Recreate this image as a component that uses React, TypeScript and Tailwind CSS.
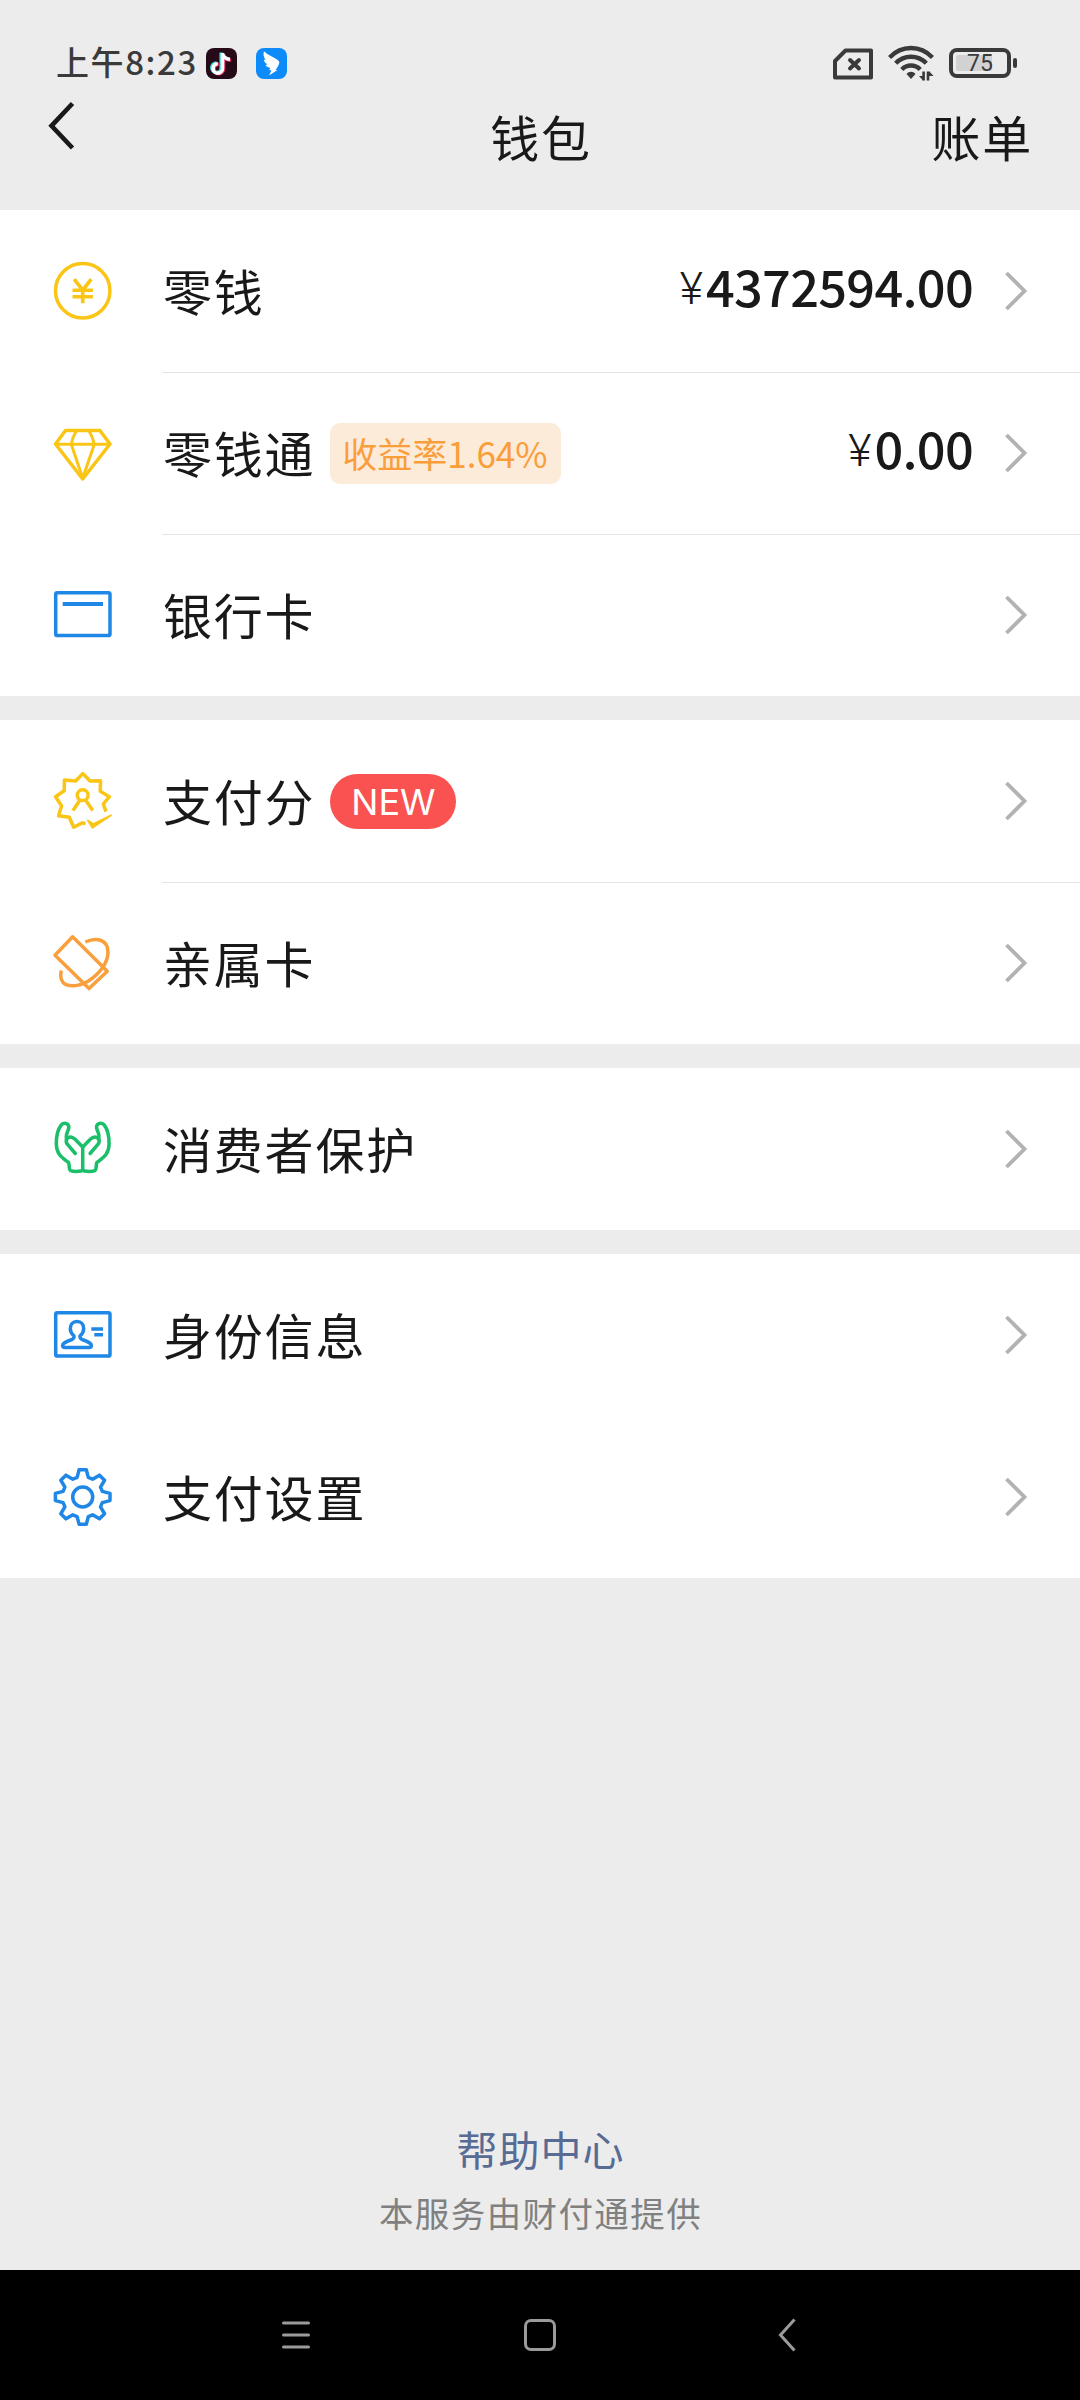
import type { ReactNode } from 'react'

interface Row {
  label: string
  icon: ReactNode
  amount?: string
  badge?: ReactNode
  divider?: boolean
}

// One tooth of the settings gear, repeated every 45 degrees
const TOOTH = [[-5.6, -19.6], [-3.6, -27.3], [3.6, -27.3], [5.6, -19.6]]

const gearPoints = Array.from({ length: 8 }, (_, i) => (i * Math.PI) / 4)
  .flatMap(a => TOOTH.map(([x, y]) => [
    32.7 + x * Math.cos(a) - y * Math.sin(a),
    33 + x * Math.sin(a) + y * Math.cos(a),
  ]))
  .map(p => p.map(n => n.toFixed(2)).join(','))
  .join(' ')

function Icon({ className, children }: { className: string; children: ReactNode }) {
  return (
    <svg viewBox="0 0 66 66" fill="none" stroke="currentColor" strokeWidth="3.5" strokeLinejoin="round"
      className={`ml-[50px] size-[66px] shrink-0 ${className}`}>
      {children}
    </svg>
  )
}

const CoinIcon = () => (
  <Icon className="text-[#fac515]">
    <circle cx="32.7" cy="32.7" r="27.2" />
    <path d="M24.2 21.2l8.5 11 8.5-11M22.5 32.2h20.4M22.5 38.7h20.4M32.7 32v13.3" strokeWidth="3.6" strokeLinejoin="miter" />
  </Icon>
)

const DiamondIcon = () => (
  <Icon className="text-[#fac515]">
    <path d="M15.5 10.5h34.4L60 24 32.7 59 5.5 24z" />
    <path d="M5.5 24.3H60M26.3 11c-2.6 4-4 8-5 13.3l11.4 34M39 11c2.6 4 4 8 5.3 13.3l-11.6 34" strokeWidth="3" />
  </Icon>
)

const CardIcon = () => (
  <Icon className="text-[#1f87e6]">
    <rect x="5.7" y="10.7" width="54.3" height="42.8" rx="1.6" />
    <path d="M12.7 22H53" strokeWidth="3.8" />
  </Icon>
)

const ScoreIcon = () => (
  <Icon className="text-[#fac515]">
    <path d="M56 43.7L53.3 36 59.4 28.7 50.2 23.3 50.5 12.8 40 13 32.7 5.6 25.7 13 14.4 12.1 14.2 22.8 5.5 28.7 11.6 37.7 8.6 47.7 19.3 49.3 23.7 59.2 32.3 54.9 35.5 55.7" />
    <path d="M37.8 52.5L43.3 56 61 47.3 42.5 59.8z" fill="currentColor" strokeWidth="1.8" />
    <circle cx="32.7" cy="27.2" r="5.4" />
    <path d="M29.7 32.5l-6.7 10M35.9 32.5l6.9 10" />
  </Icon>
)

const FamilyCardIcon = () => (
  <Icon className="text-[#f9a03c]">
    <path d="M22.6 6.8L57.3 41.2 39 58.6 5 25.3z" />
    <path d="M35.3 12C46 7 57.8 9 58 22c0 11-8.5 22-20 29.2C28 57 18 57 13.5 53c-3-3.5-3.3-8-2.2-12.5" />
  </Icon>
)

const Hand = () => (
  <>
    <path d="M32.7 31L24.8 23C22 20.5 19 20.5 17.2 22.5C15.5 24.5 15.8 26.5 17.7 28.7L25.3 37.5" strokeLinecap="round" />
    <path d="M16.5 23C15.3 18.5 17.8 16 18.8 12C19.5 7.5 14.5 5.8 11.3 8.8C7.5 13.5 6.2 21 6.3 28C6.5 38.5 12 41.5 18.5 46.5C19.8 48.5 18.3 53 20.5 54.6C23 55.5 28 55.5 31 55C32.2 54.8 32.7 54 32.7 53" />
  </>
)

const HandsIcon = () => (
  <Icon className="text-[#1cbf69]">
    <Hand />
    <g transform="translate(65.4 0) scale(-1 1)"><Hand /></g>
    <path d="M32.7 31v22" />
  </Icon>
)

const IdentityIcon = () => (
  <Icon className="text-[#1f87e6]">
    <rect x="5.7" y="10.7" width="54.3" height="43.3" rx="1.6" />
    <path d="M27 19.5c-4.5 0-6.7 3.2-6.7 7.2 0 3.3 1.7 5.6 3.7 7.3.3 2.5-.7 3-2.3 3.6-3.7 1.3-7.2 2.3-8.7 4.7-1 2 .2 3.3 2 3.3h24c1.9 0 3-1.3 2-3.3-1.5-2.4-5-3.4-8.7-4.7-1.6-.6-2.6-1.1-2.3-3.6 2-1.7 3.7-4 3.7-7.3 0-4-2.2-7.2-6.7-7.2z" />
    <path d="M41.3 27H53M44.3 32.8H53" />
  </Icon>
)

const GearIcon = () => (
  <Icon className="text-[#1f87e6]">
    <polygon points={gearPoints} />
    <circle cx="32.7" cy="33" r="10" />
  </Icon>
)

const groups: Row[][] = [
  [
    { label: '零钱', icon: <CoinIcon />, amount: '4372594.00', divider: true },
    {
      label: '零钱通',
      icon: <DiamondIcon />,
      amount: '0.00',
      badge: (
        <span className="mt-px ml-[15px] flex h-[61px] w-[231px] items-center justify-center rounded-[10px] bg-[#fdebd9] pr-[2px] text-[35px] text-[#fa9d3b]">
          收益率1.64%
        </span>
      ),
      divider: true,
    },
    { label: '银行卡', icon: <CardIcon /> },
  ],
  [
    {
      label: '支付分',
      icon: <ScoreIcon />,
      badge: (
        <span className="mt-px ml-[15px] flex h-[55px] w-[126px] items-center justify-center rounded-full bg-[#fa5151] font-['Inter',sans-serif] text-[36px] text-white">
          NEW
        </span>
      ),
      divider: true,
    },
    { label: '亲属卡', icon: <FamilyCardIcon /> },
  ],
  [{ label: '消费者保护', icon: <HandsIcon /> }],
  [
    { label: '身份信息', icon: <IdentityIcon /> },
    { label: '支付设置', icon: <GearIcon /> },
  ],
]

function StatusBar() {
  return (
    <div className="flex h-[84px] items-center pt-[42px] text-[#3a3a3a]">
      <span className="mb-[3px] ml-[56px] w-[150px] text-[33px] font-medium leading-none tracking-[1.6px] whitespace-nowrap">上午8:23</span>
      {/* Notification icons */}
      <svg viewBox="0 0 31 31" className="size-[31px]">
        <rect width="31" height="31" rx="8" fill="#260a17" />
        <g fill="none" strokeWidth="3.6">
          <path d="M15.2 4.5v15.2a4.7 4.7 0 1 1-4.7-4.7M15.2 5c.5 3.3 3.3 5.5 7.3 5.8" stroke="#31dbd5" />
          <path d="M17.6 6v15a4.7 4.7 0 1 1-4.7-4.7M17.6 6.5c.5 3.3 3.3 5.5 7.3 5.8" stroke="#e0245e" />
          <path d="M16.5 5v15.4a4.7 4.7 0 1 1-4.7-4.7M16.5 5.5c.5 3.3 3.7 5.6 7.5 5.8" stroke="#fff" />
        </g>
      </svg>
      <svg viewBox="0 0 31 31" className="ml-[19px] size-[31px]">
        <rect width="31" height="31" rx="8" fill="#0d8bfb" />
        <path d="M8 3.3c3.5 3.8 9 5.5 13 8.2 2 1.3 2.8 2.5 2 4.5-1 2.5-2.2 4.3-3.5 6h2L13 27.5l2.5-5-2.3-.5 1.3-2.2c-2.7-.3-4.3-1.3-5-3l2.3-.2c-2.5-1.2-3.6-2.8-4-5.1l2 .5C7.5 9.5 7 6.500 8 3.300z" fill="#fff" />
      </svg>

      <svg viewBox="0 0 40 32" fill="none" stroke="currentColor" strokeWidth="4" strokeLinejoin="round" className="mt-[2px] ml-auto h-[32px] w-[40px]">
        <path d="M12.5 2.5H38v27H2V13z" />
        <path d="M17 12l9 8.5M26 12l-9 8.5" strokeLinecap="round" />
      </svg>
      <svg viewBox="0 0 46 36" fill="none" stroke="currentColor" strokeWidth="4.4" className="mr-[15px] ml-[15px] h-[36px] w-[46px]">
        <path d="M1.5 12.5C13.5-.2 32.5-.2 44.5 12.5M7.7 18.3c8.6-8.7 22-8.7 30.6 0M13.8 24.5c5.2-5.3 13.2-5.3 18.4 0" />
        <path d="M18.5 29c2.5-3 6.5-3 9 0L23 34z" fill="currentColor" stroke="none" />
        <path d="M35.6 26.5v9M40 26.5v9" strokeWidth="2.6" />
        <path d="M31 31h4v4.5zM41 31h4.5L41 26z" fill="currentColor" stroke="none" />
      </svg>
      {/* Battery */}
      <span className="relative flex h-[30px] w-[62px] items-center justify-center rounded-[8px] border-4 border-[#3a3a3a]">
        <span className="absolute left-[3px] top-[3px] h-[16px] w-[36px] rounded-[2px] bg-[#d2d2d2]" />
        <span className="relative mt-px font-['Roboto',sans-serif] text-[23px] leading-none">75</span>
      </span>
      <span className="ml-[2px] mr-[63px] h-[10px] w-[4px] rounded-[2px] bg-[#3a3a3a]" />
    </div>
  )
}

function Header() {
  return (
    <div className="grid h-[126px] grid-cols-[1fr_auto_1fr] items-start text-[49px] leading-[56px] tracking-[1.7px]">
      <svg viewBox="0 0 30 52" fill="none" stroke="currentColor" strokeWidth="4.6" className="ml-[46px] mt-[16px] h-[52px] w-[30px]">
        <path d="M26.5 3.5l-21 22.3 21 22.2" />
      </svg>
      <h1 className="mt-[24px] pl-[2px]">钱包</h1>
      <button className="mt-[24px] mr-[47px] justify-self-end">账单</button>
    </div>
  )
}

function ListRow({ label, icon, amount, badge, divider }: Row) {
  return (
    <div className="flex h-[162px] items-center">
      {icon}
      <div className={`ml-[46px] flex h-full flex-1 items-center ${divider ? 'shadow-[0_1px_0_#e4e4e4]' : ''}`}>
        <span className="ml-px pb-[2px] text-[49px] tracking-[1.8px]">{label}</span>
        {badge}
        {amount && (
          <span className="ml-auto flex items-baseline pb-[9px]">
            <span className="mr-[3px] -translate-y-[3px] font-['Roboto',sans-serif] text-[45px] font-light">¥</span>
            <span className="text-[50.5px] font-medium tracking-[-0.7px]">{amount}</span>
          </span>
        )}
        <svg viewBox="0 0 24 42" fill="none" stroke="#b2b2b2" strokeWidth="3.8"
          className={`mr-[52px] h-[42px] w-[24px] ${amount ? 'ml-[31px]' : 'ml-auto'}`}>
          <path d="M2.5 3l18 18-18 18" />
        </svg>
      </div>
    </div>
  )
}

function NavBar() {
  return (
    <div className="flex h-[130px] items-center bg-black text-[#9b9b9b]">
      <svg viewBox="0 0 28 32" fill="none" stroke="currentColor" strokeWidth="3.2" strokeLinecap="round" className="ml-[282px] h-[32px] w-[28px]">
        <path d="M1.6 4h24.8M1.6 16h24.8M1.6 28h24.8" />
      </svg>
      <span className="ml-[214px] h-[32px] w-[32px] rounded-[7px] border-[3px] border-[#9b9b9b]" />
      <svg viewBox="0 0 20 34" fill="none" stroke="currentColor" strokeWidth="3" className="ml-[222px] h-[34px] w-[20px]">
        <path d="M16.5 1.5L2.5 17l14 15.5" />
      </svg>
    </div>
  )
}

export default function App() {
  return (
    <div className="flex h-[2400px] w-[1080px] flex-col bg-[#ececec] font-['Noto_Sans_CJK_SC',sans-serif] text-[#191919]">
      <StatusBar />
      <Header />
      <main className="flex flex-col gap-[24px]">
        {groups.map((rows, i) => (
          <section key={i} className="bg-white">
            {rows.map(row => <ListRow key={row.label} {...row} />)}
          </section>
        ))}
      </main>
      <footer className="mt-auto flex flex-col items-center pb-[33px] text-center">
        <a className="pl-px text-[41px] leading-[60px] tracking-[1px] text-[#576b95]">帮助中心</a>
        <p className="mt-[9px] pl-px text-[34.5px] leading-[50px] tracking-[1.4px] text-[#808080]">本服务由财付通提供</p>
      </footer>
      <NavBar />
    </div>
  )
}
